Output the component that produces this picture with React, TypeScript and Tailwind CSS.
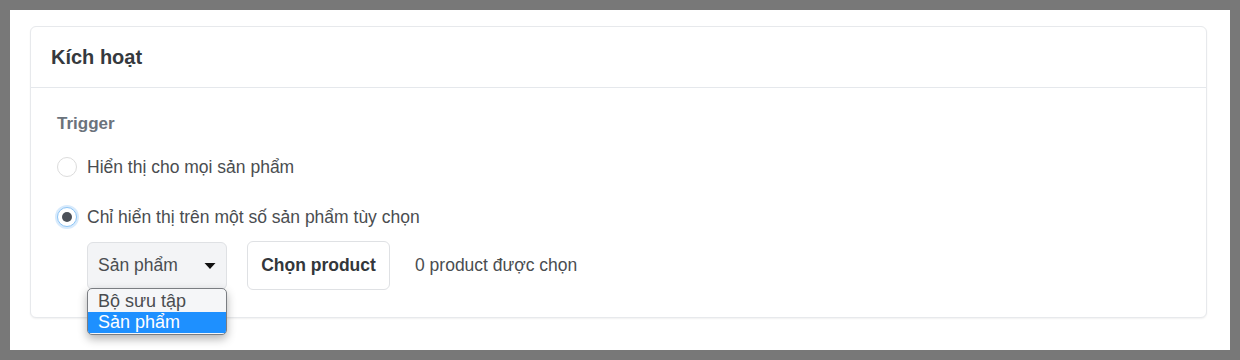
import React from "react";

export default function App() {
  return (
    <div
      className="w-[1240px] h-[360px] bg-[#787878] p-[10px]"
      style={{ fontFamily: '"Liberation Sans", Arial, sans-serif' }}
    >
      <div className="w-[1220px] h-[340px] bg-white pt-[16px] pl-[20px]">
        <div className="w-[1177px] h-[292px] rounded-[6px] border border-[#e7e9ec] shadow-[0_1px_2px_rgba(0,0,0,0.06)] bg-white">
          <div className="h-[61px] border-b border-[#e5e8ec] flex items-center pl-[20px]">
            <h2 className="text-[20px] font-bold text-[#35393d]">Kích hoạt</h2>
          </div>
          <div className="pl-[26px] pt-[25px]">
            <div className="text-[17px] font-bold text-[#6b737c] leading-[22px]">Trigger</div>
            <div className="mt-[20px] flex items-center h-[24px]">
              <span className="w-[20px] h-[20px] rounded-full border border-[#dcdcdc] bg-white" />
              <span className="ml-[10px] text-[17.5px] text-[#4a4d50]">Hiển thị cho mọi sản phẩm</span>
            </div>
            <div className="mt-[26px] flex items-center h-[24px]">
              <span className="w-[20px] h-[20px] rounded-full border border-[#8cc4f5] bg-white flex items-center justify-center shadow-[0_0_0_2px_rgba(140,196,245,0.35)]">
                <span className="w-[10px] h-[10px] rounded-full bg-[#4b5058]" />
              </span>
              <span className="ml-[10px] text-[17.5px] text-[#4a4d50]">Chỉ hiển thị trên một số sản phẩm tùy chọn</span>
            </div>
            <div className="mt-[12px] ml-[30px] flex items-center">
              <div className="relative">
                <div className="w-[140px] h-[48px] rounded-[6px] border border-[#dfe1e4] bg-[#f3f4f6] flex items-center justify-between pl-[10px] pr-[10px]">
                  <span className="text-[17.5px] text-[#4a4d50]">Sản phẩm</span>
                  <svg width="12" height="8" viewBox="0 0 12 8">
                    <path d="M0.5 1 L11.5 1 L6 7 Z" fill="#111" />
                  </svg>
                </div>
                <div className="absolute left-0 top-[46px] w-[140px] rounded-[5px] border border-[#7a7d82] bg-[#f5f6f8] shadow-[0_4px_10px_rgba(0,0,0,0.3)] overflow-hidden py-[1px]">
                  <div className="h-[22px] px-[10px] text-[18px] leading-[22px] text-[#4a4d50]">Bộ sưu tập</div>
                  <div className="h-[21px] px-[10px] text-[18px] leading-[21px] text-white bg-[#1e90ff]">Sản phẩm</div>
                </div>
              </div>
              <div className="ml-[20px] w-[143px] h-[49px] rounded-[6px] border border-[#dfe1e4] bg-white flex items-center justify-center">
                <span className="text-[17.5px] font-bold text-[#33373b]">Chọn product</span>
              </div>
              <span className="ml-[25px] text-[17.5px] text-[#4a4d50]">0 product được chọn</span>
            </div>
          </div>
        </div>
      </div>
    </div>
  );
}
